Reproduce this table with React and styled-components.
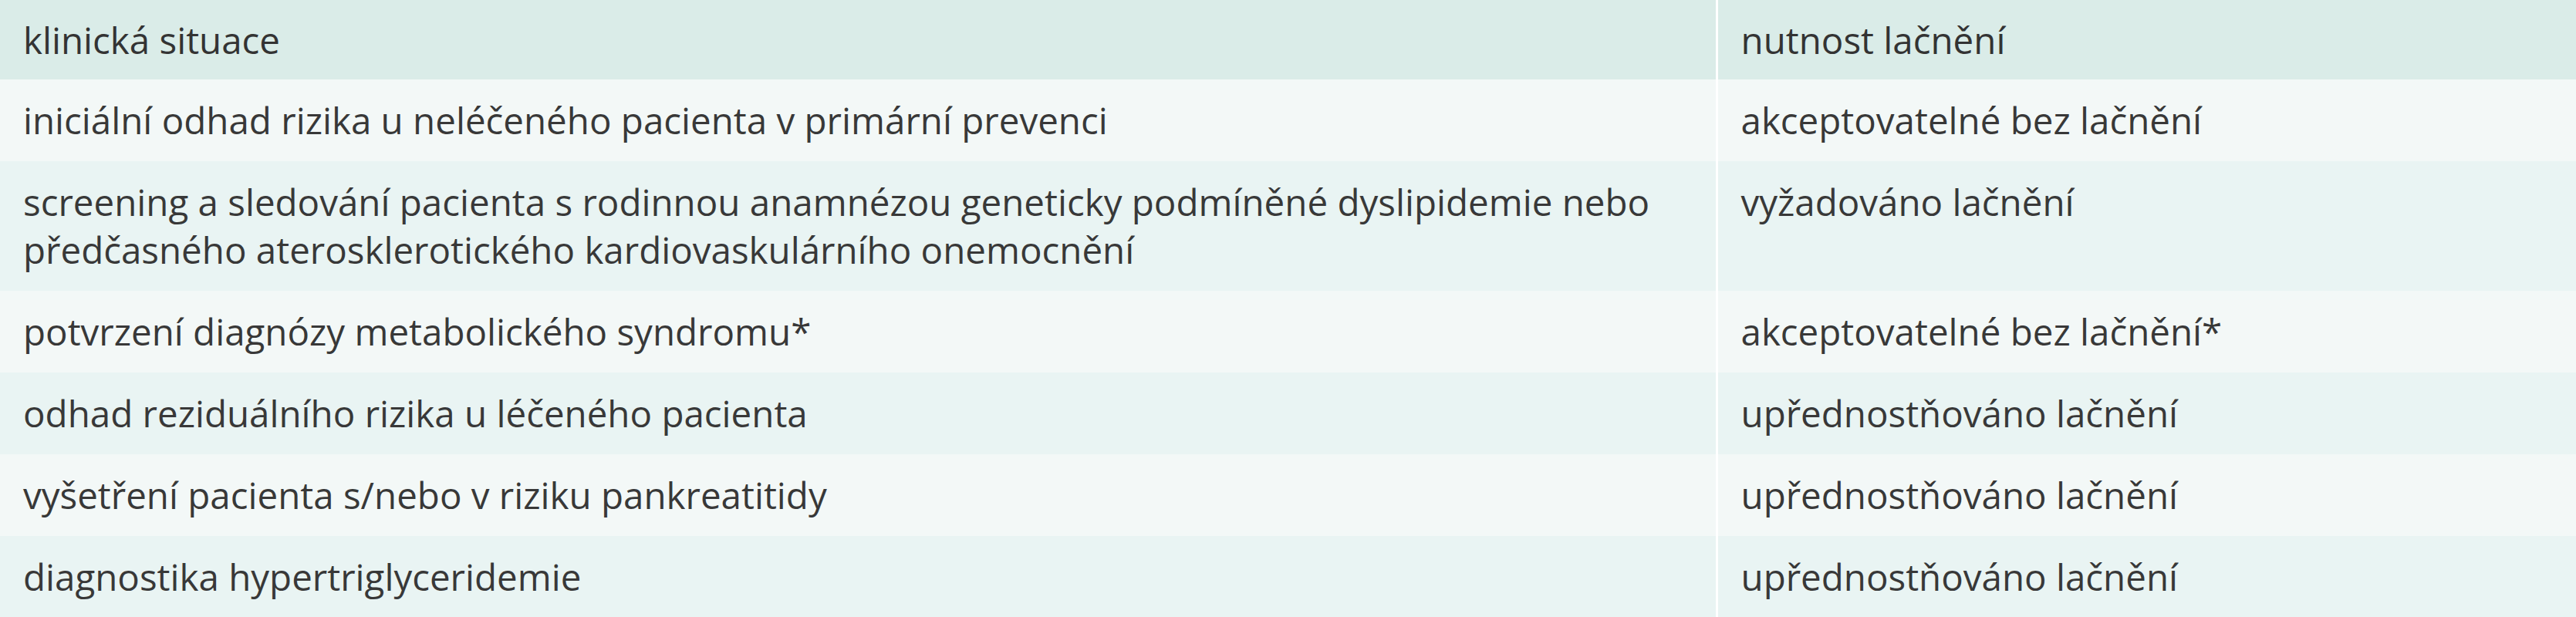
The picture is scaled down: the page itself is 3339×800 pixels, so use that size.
import React from "react";
import styled, { createGlobalStyle } from "styled-components";

const Global = createGlobalStyle`
  html, body { margin: 0; padding: 0; background: #ffffff; }
  body { font-family: "Open Sans", "Liberation Sans", sans-serif; }
`;

const Table = styled.table`
  width: 3339px;
  border-collapse: collapse;
  table-layout: fixed;
  font-family: "Open Sans", "Liberation Sans", sans-serif;
  font-size: 47.5px;
  line-height: 62px;
  color: #383838;
`;

const Col1 = styled.col`
  width: 2225px;
`;

const Row = styled.tr`
  background: ${(p) => (p.$head ? "#daece8" : p.$alt ? "#e9f4f3" : "#f3f8f7")};
`;

const HeadCell = styled.th`
  text-align: left;
  font-weight: 400;
  height: 103px;
  box-sizing: border-box;
  padding: 0 30px;
  vertical-align: middle;
  color: #333333;
  & + & { border-left: 3px solid #ffffff; }
`;

const Cell = styled.td`
  padding: 22px 30px 22px;
  vertical-align: top;
  & + & { border-left: 3px solid #ffffff; }
`;

const rows = [
  ["iniciální odhad rizika u neléčeného pacienta v primární prevenci", "akceptovatelné bez lačnění"],
  [
    <>
      screening a sledování pacienta s rodinnou anamnézou geneticky podmíněné dyslipidemie nebo
      <br />
      předčasného aterosklerotického kardiovaskulárního onemocnění
    </>,
    "vyžadováno lačnění",
  ],
  ["potvrzení diagnózy metabolického syndromu*", "akceptovatelné bez lačnění*"],
  ["odhad reziduálního rizika u léčeného pacienta", "upřednostňováno lačnění"],
  ["vyšetření pacienta s/nebo v riziku pankreatitidy", "upřednostňováno lačnění"],
  ["diagnostika hypertriglyceridemie", "upřednostňováno lačnění"],
];

export default function App() {
  return (
    <>
      <Global />
      <Table>
        <colgroup>
          <Col1 />
          <col />
        </colgroup>
        <thead>
          <Row $head>
            <HeadCell>klinická situace</HeadCell>
            <HeadCell>nutnost lačnění</HeadCell>
          </Row>
        </thead>
        <tbody>
          {rows.map((r, i) => (
            <Row key={i} $alt={i % 2 === 1}>
              <Cell>{r[0]}</Cell>
              <Cell>{r[1]}</Cell>
            </Row>
          ))}
        </tbody>
      </Table>
    </>
  );
}
